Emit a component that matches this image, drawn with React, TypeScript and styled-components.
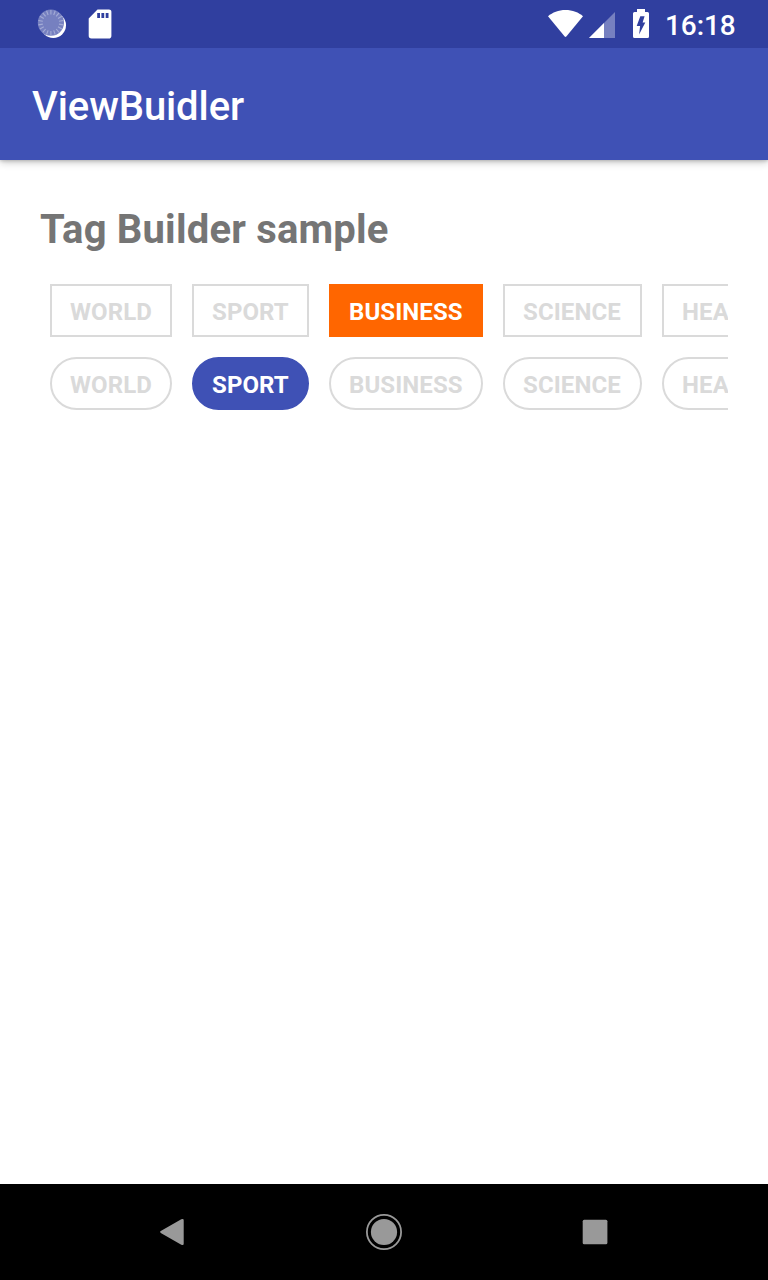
import React from "react";
import styled, { createGlobalStyle } from "styled-components";

const GlobalStyle = createGlobalStyle`
  * { box-sizing: border-box; }
  body { margin: 0; background: #fff; font-family: Roboto, sans-serif; }
`;

const Screen = styled.div`
  display: flex;
  flex-direction: column;
  width: 768px;
  height: 1280px;
  overflow: hidden;
  background: #fff;
`;

const StatusBar = styled.header`
  position: relative;
  z-index: 1;
  display: flex;
  justify-content: space-between;
  flex: 0 0 48px;
  padding: 0 32px 0 36px;
  background: #303f9f;
`;

const StatusGroup = styled.div`
  display: flex;
  height: 48px;
`;

const StatusIcon = styled.svg<{ $gap?: number }>`
  display: block;
  flex: none;
  margin-left: ${(p) => p.$gap ?? 0}px;
`;

const Clock = styled.span`
  width: 71px;
  margin-left: 13px;
  color: #fff;
  font-size: 28px;
  font-weight: 500;
  letter-spacing: -0.1px;
  line-height: 52px;
  white-space: nowrap;
`;

const AppBar = styled.div`
  display: flex;
  align-items: center;
  flex: 0 0 112px;
  padding: 6px 32px 0;
  background: #3f51b5;
  box-shadow: 0 2px 8px rgba(0, 0, 0, 0.24), 0 1px 3px rgba(0, 0, 0, 0.16);
`;

const AppTitle = styled.h1`
  margin: 0;
  color: #fff;
  font-size: 40px;
  font-weight: 500;
  letter-spacing: -0.1px;
  line-height: 48px;
`;

const Content = styled.main`
  display: flex;
  flex-direction: column;
  flex: 1;
  padding: 40px 40px 0;
`;

const Heading = styled.h2`
  margin: 0 0 20px;
  height: 54px;
  color: #757575;
  font-size: 40px;
  font-weight: 700;
  letter-spacing: 0.19px;
  line-height: 60px;
`;

const TagRows = styled.section`
  display: flex;
  flex-direction: column;
  gap: 20px;
  padding: 10px 0;
`;

const TagStrip = styled.div`
  display: flex;
  gap: 20px;
  padding-left: 10px;
  overflow: hidden;
`;

const Tag = styled.span<{ $width: number; $round?: boolean; $fill?: string }>`
  flex: none;
  width: ${(p) => p.$width}px;
  height: 53px;
  padding-left: 18px;
  border: 2px solid ${(p) => p.$fill ?? "#dadada"};
  border-radius: ${(p) => (p.$round ? "27px" : "0")};
  background: ${(p) => p.$fill ?? "transparent"};
  color: ${(p) => (p.$fill ? "#fff" : "#dadada")};
  font-size: 24px;
  font-weight: 700;
  letter-spacing: 0.1px;
  line-height: 52px;
  white-space: nowrap;
`;

const NavBar = styled.nav`
  display: flex;
  align-items: center;
  justify-content: space-between;
  flex: 0 0 96px;
  padding: 0 149px;
  background: #000;
`;

const NavIcon = styled.svg`
  display: block;
`;

const tags = [
  { label: "WORLD", width: 122 },
  { label: "SPORT", width: 117 },
  { label: "BUSINESS", width: 154 },
  { label: "SCIENCE", width: 139 },
  { label: "HEALTH", width: 128 },
];

function TagRow({ selected, fill, round }: { selected: string; fill: string; round?: boolean }) {
  return (
    <TagStrip>
      {tags.map((t) => (
        <Tag key={t.label} $width={t.width} $round={round} $fill={t.label === selected ? fill : undefined}>
          {t.label}
        </Tag>
      ))}
    </TagStrip>
  );
}

const rays = Array.from({ length: 18 }, (_, i) => i * 20);

export default function App() {
  return (
    <Screen>
      <GlobalStyle />
      <StatusBar>
        <StatusGroup>
          <StatusIcon width="32" height="48" viewBox="0 0 32 48">
            <circle cx="17.3" cy="25.2" r="12.7" fill="#fff" />
            <circle cx="14.9" cy="22.7" r="13.1" fill="#7680c0" />
            {rays.map((a) => (
              <path key={a} d="M14.9 10v4.5" stroke="#a4abd6" strokeWidth="1.1" transform={`rotate(${a} 14.9 22.7)`} />
            ))}
          </StatusIcon>
          <StatusIcon $gap={16} width="32" height="48" viewBox="0 0 32 48">
            <path d="M13.5 9.5H24.8a2.6 2.6 0 0 1 2.6 2.8v23.4a2.8 2.8 0 0 1-2.8 2.8H7.5a2.8 2.8 0 0 1-2.8-2.8V18.5Z" fill="#fff" />
            <path d="M13.2 13h2.8v5h-2.8zM17.4 13h2.8v5h-2.8zM21.7 13h2.8v5h-2.8z" fill="#303f9f" />
          </StatusIcon>
        </StatusGroup>
        <StatusGroup>
          <StatusIcon width="38" height="48" viewBox="0 0 38 48">
            <path d="M0 16.2C4.5 12.4 10.5 10 17.5 10s13.2 2.4 17.5 6.2L18.3 36.6q-.8.9-1.6 0Z" fill="#fff" />
          </StatusIcon>
          <StatusIcon width="30" height="48" viewBox="0 0 30 48">
            <path d="M29 12v26H3Z" fill="#7680c0" />
            <path d="M18 23V38H3Z" fill="#fff" />
          </StatusIcon>
          <StatusIcon $gap={12} width="24" height="48" viewBox="0 0 24 48">
            <path d="M9 9h8v3h2.5a1.5 1.5 0 0 1 1.5 1.5v23a1.5 1.5 0 0 1-1.5 1.5h-13A1.5 1.5 0 0 1 5 36.5v-23A1.5 1.5 0 0 1 6.5 12H9Z" fill="#fff" />
            <path d="M12.3 16.3h4.3l-2 6.2h2.7l-6.2 12 1-8.5H8.7Z" fill="#303f9f" />
          </StatusIcon>
          <Clock>16:18</Clock>
        </StatusGroup>
      </StatusBar>
      <AppBar>
        <AppTitle>ViewBuidler</AppTitle>
      </AppBar>
      <Content>
        <Heading>Tag Builder sample</Heading>
        <TagRows>
          <TagRow selected="BUSINESS" fill="#ff6600" />
          <TagRow selected="SPORT" fill="#3f51b5" round />
        </TagRows>
      </Content>
      <NavBar>
        <NavIcon width="48" height="48" viewBox="0 0 48 48">
          <path d="M12.2 22.8 32.3 11.3q2.4-1.2 2.4 1v23.4q0 2.2-2.4 1L12.2 25.2q-2.2-1.2 0-2.4Z" fill="#999" />
        </NavIcon>
        <NavIcon width="48" height="48" viewBox="0 0 48 48">
          <circle cx="24" cy="24" r="17.1" fill="none" stroke="#999" strokeWidth="1.8" />
          <circle cx="24" cy="24" r="13.1" fill="#999" />
        </NavIcon>
        <NavIcon width="48" height="48" viewBox="0 0 48 48">
          <rect x="11.7" y="11.7" width="24.7" height="24.6" rx="1.5" fill="#999" />
        </NavIcon>
      </NavBar>
    </Screen>
  );
}
